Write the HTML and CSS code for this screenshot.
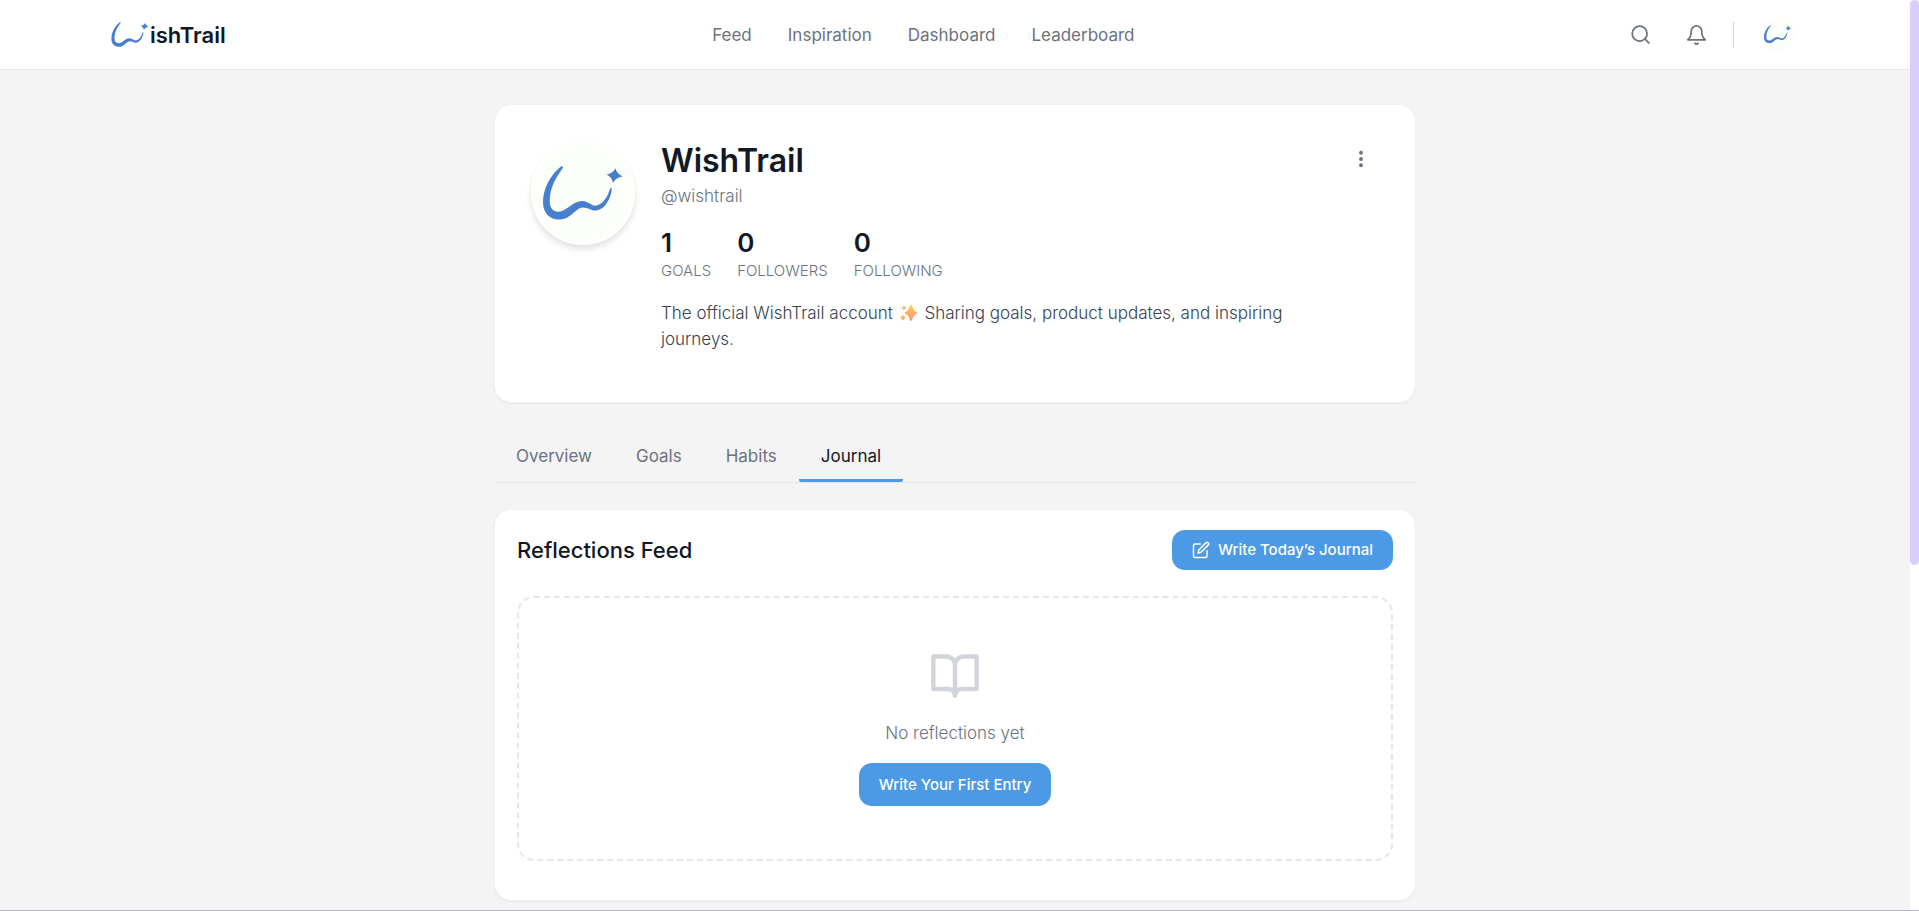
FILE: index.html
```html
<!DOCTYPE html>
<html lang="en">
<head>
<meta charset="utf-8">
<meta name="viewport" content="width=device-width, initial-scale=1">
<title>WishTrail</title>
<link rel="stylesheet" href="styles.css">
</head>
<body>
<svg class="defs" aria-hidden="true">
  <symbol id="mark" viewBox="183 228 238 160">
    <path d="M238 228C205 255 183 295 183 335C183 370 205 387 230 387C268 387 278 352 302 351C320 351 325 362 342 360C368 357 385 325 388 294L383 294C375 322 357 346 338 346C325 346 320 333 300 332C268 332 255 364 228 364C210 363 203 350 203 332C203 290 222 262 243 232Z"/>
    <path d="M398 234Q403 251 420 258Q400 262 391 278Q388 260 372 253Q391 250 398 234Z"/>
  </symbol>
</svg>
<div class="shell">
  <div class="page">
    <header class="topbar">
      <div class="topbar-inner">
        <a class="brand" href="#"><svg class="brand-mark" aria-hidden="true"><use href="#mark"/></svg><span>ishTrail</span></a>
        <nav class="nav" aria-label="Main">
          <a href="#">Feed</a><a href="#">Inspiration</a><a href="#">Dashboard</a><a href="#">Leaderboard</a>
        </nav>
        <div class="actions">
          <button class="icon-btn" type="button" aria-label="Search"><svg class="icon" viewBox="0 0 24 24"><circle cx="11" cy="11" r="8.500"/><path d="m21.500 21.500-4.500-4.500"/></svg></button>
          <button class="icon-btn" type="button" aria-label="Notifications"><svg class="icon" viewBox="0 0 24 24"><path d="M18 8A6 6 0 0 0 6 8c0 7-4 10-4 10h20s-4-3-4-10"/><path d="M13.730 22a2 2 0 0 1-3.460 0"/></svg></button>
          <span class="divider"></span>
          <button class="me" type="button" aria-label="Account"><span class="avatar avatar-sm"><svg class="avatar-mark" aria-hidden="true"><use href="#mark"/></svg></span></button>
        </div>
      </div>
    </header>
    <main class="content">
      <section class="card profile">
        <div class="avatar avatar-lg"><svg class="avatar-mark" aria-hidden="true"><use href="#mark"/></svg></div>
        <div class="profile-body">
          <h1 class="name">WishTrail</h1>
          <p class="handle">@wishtrail</p>
          <dl class="stats">
            <div class="stat"><dt>Goals</dt><dd>1</dd></div>
            <div class="stat"><dt>Followers</dt><dd>0</dd></div>
            <div class="stat"><dt>Following</dt><dd>0</dd></div>
          </dl>
          <p class="bio">The official WishTrail account <svg class="sparkles" viewBox="0 0 54 48" role="img" aria-label="sparkles"><defs><linearGradient id="glow" x1="0" y1="0" x2="0" y2="1"><stop offset="0" stop-color="#ffcf4a"/><stop offset="1" stop-color="#f98f7c"/></linearGradient></defs><g fill="url(#glow)"><path d="M33 0Q36 0 37 4Q40 18 50 21Q54 23 50 26Q40 29 37 43Q36 48 33 48Q30 48 29 43Q26 29 16 26Q12 23 16 21Q26 18 29 4Q30 0 33 0Z"/><path d="M12 1Q14 7 19 8Q14 10 12 16Q10 10 5 8Q10 7 12 1Z"/><path d="M9 28Q11 36 18 38Q11 40 9 47Q7 40 0 38Q7 36 9 28Z"/></g></svg> Sharing goals, product updates, and inspiring journeys.</p>
        </div>
        <button class="more" type="button" aria-label="More options"><svg class="dots" viewBox="0 0 24 24"><circle cx="12" cy="4.500" r="2.300"/><circle cx="12" cy="12" r="2.300"/><circle cx="12" cy="19.500" r="2.300"/></svg></button>
      </section>
      <nav class="tabs" aria-label="Profile sections">
        <a class="tab" href="#">Overview</a><a class="tab" href="#">Goals</a><a class="tab" href="#">Habits</a><a class="tab tab-active" href="#" aria-current="page">Journal</a>
      </nav>
      <section class="card journal">
        <div class="journal-head">
          <h2 class="journal-title">Reflections Feed</h2>
          <button class="btn btn-write" type="button"><svg class="pen" viewBox="0 0 24 24" aria-hidden="true"><path d="M11 4H4a2 2 0 0 0-2 2v14a2 2 0 0 0 2 2h14a2 2 0 0 0 2-2v-7"/><path d="M18.500 2.500a2.120 2.120 0 0 1 3 3L12 15l-4 1 1-4Z"/></svg>Write Today’s Journal</button>
        </div>
        <div class="empty">
          <svg class="book" viewBox="0 0 24 24" aria-hidden="true"><path d="M2 3h6a4 4 0 0 1 4 4v14a3 3 0 0 0-3-3H2Z"/><path d="M22 3h-6a4 4 0 0 0-4 4v14a3 3 0 0 1 3-3h7Z"/></svg>
          <p class="empty-text">No reflections yet</p>
          <button class="btn btn-first" type="button">Write Your First Entry</button>
        </div>
      </section>
    </main>
  </div>
  <div class="scroll-track" aria-hidden="true"><div class="scroll-thumb"></div></div>
</div>
</body>
</html>
```

FILE: styles.css
```css
* { box-sizing: border-box; }
body {
  margin: 0;
  background: #f4f4f4;
  color: #111827;
  font-family: Inter, "Noto Sans", sans-serif;
  font-size: 16px;
  line-height: 24px;
}
h1, h2, p, dl, dd { margin: 0; }
a { color: inherit; text-decoration: none; }
button { font: inherit; border: 0; padding: 0; background: none; cursor: pointer; }
svg { display: block; }
.defs { display: none; }

.shell { display: flex; min-height: 100vh; border-bottom: 1px solid #b4b8c6; }
.page { flex: 1; min-width: 0; }
.scroll-track { width: 9px; background: #fff; }
.scroll-thumb { height: 62vh; border-radius: 5px; background: #d9cdfb; }

.topbar { background: #fff; border-bottom: 1px solid #e5e7eb; }
.topbar-inner {
  display: flex;
  align-items: center;
  justify-content: space-between;
  max-width: 1688px;
  height: 69px;
  margin: 0 auto;
}
.brand { display: flex; align-items: center; gap: 1px; font-size: 22px; font-weight: 600; }
.brand-mark { width: 38px; height: 25px; fill: #467fcf; }
.nav { display: flex; gap: 36px; color: #6b7280; font-size: 17px; }
.actions { display: flex; align-items: center; gap: 17px; }
.icon-btn { display: grid; place-items: center; width: 39px; height: 40px; color: #6b7280; }
.icon { width: 21px; height: 21px; }
.icon, .pen, .book { fill: none; stroke: currentColor; stroke-width: 2; stroke-linecap: round; stroke-linejoin: round; }
.divider { width: 1px; height: 26px; background: #d1d5db; }
.me { padding: 0 4px 0 10px; }

.avatar { display: grid; place-items: center; flex: none; border-radius: 50%; background: #fbfef9; }
.avatar-mark { width: 80%; height: 54%; fill: #467fcf; }
.avatar-sm { width: 34px; height: 34px; }
.avatar-lg { width: 104px; height: 104px; border: 2px solid #fff; box-shadow: 0 4px 6px rgba(0, 0, 0, .12); }

.content { max-width: 922px; margin: 0 auto; padding: 34px 0 7px; }
.card { background: #fff; border: 1px solid #f1f1f2; border-radius: 17px; box-shadow: 0 1px 2px rgba(0, 0, 0, .05); }
.profile { display: flex; align-items: flex-start; gap: 26px; padding: 36px 36px 50px; }
.profile-body { flex: 1; min-width: 0; }
.name { font-size: 32px; line-height: 40px; font-weight: 600; }
.handle { margin-top: 3px; color: #6b7280; font-size: 17px; font-weight: 300; }
.stats { display: flex; gap: 26px; margin-top: 19px; }
.stat { display: flex; flex-direction: column-reverse; }
.stat dt { color: #6b7280; font-size: 15px; font-weight: 300; text-transform: uppercase; line-height: 24px; }
.stat dd { font-size: 26px; line-height: 32px; font-weight: 600; }
.bio { margin-top: 17px; max-width: 640px; color: #374151; font-size: 17px; font-weight: 300; line-height: 26px; }
.sparkles { display: inline-block; width: 18px; height: 16px; margin: 0 2px; vertical-align: -2px; }
.more { display: grid; place-items: center; width: 36px; height: 36px; color: #6b7280; }
.dots { width: 20px; height: 20px; fill: currentColor; }

.tabs { display: flex; margin-top: 31px; border-bottom: 1px solid #e5e7eb; }
.tab { padding: 10px 22px 11px; border-bottom: 3px solid transparent; border-radius: 2px; color: #6b7280; font-size: 17px; }
.tab-active { border-color: #4c99e6; color: #111827; }

.journal { margin-top: 26px; padding: 20px 22px 39px; }
.journal-head { display: flex; align-items: center; justify-content: space-between; }
.journal-title { font-size: 22px; line-height: 28px; font-weight: 500; }
.btn { display: flex; align-items: center; gap: 8px; border-radius: 13px; background: #4c99e6; color: #fff; font-size: 15px; font-weight: 500; }
.btn-write { height: 40px; padding: 0 20px; }
.btn-first { height: 43px; padding: 0 20px; margin-top: 18px; }
.pen { width: 18px; height: 18px; }
.empty {
  display: flex;
  flex-direction: column;
  align-items: center;
  margin-top: 26px;
  padding: 52px 20px 53px;
  border: 2px dashed #e5e7eb;
  border-radius: 17px;
}
.book { width: 52px; height: 52px; color: #d1d5db; }
.empty-text { margin-top: 19px; color: #6b7280; font-size: 17px; font-weight: 300; }
```
